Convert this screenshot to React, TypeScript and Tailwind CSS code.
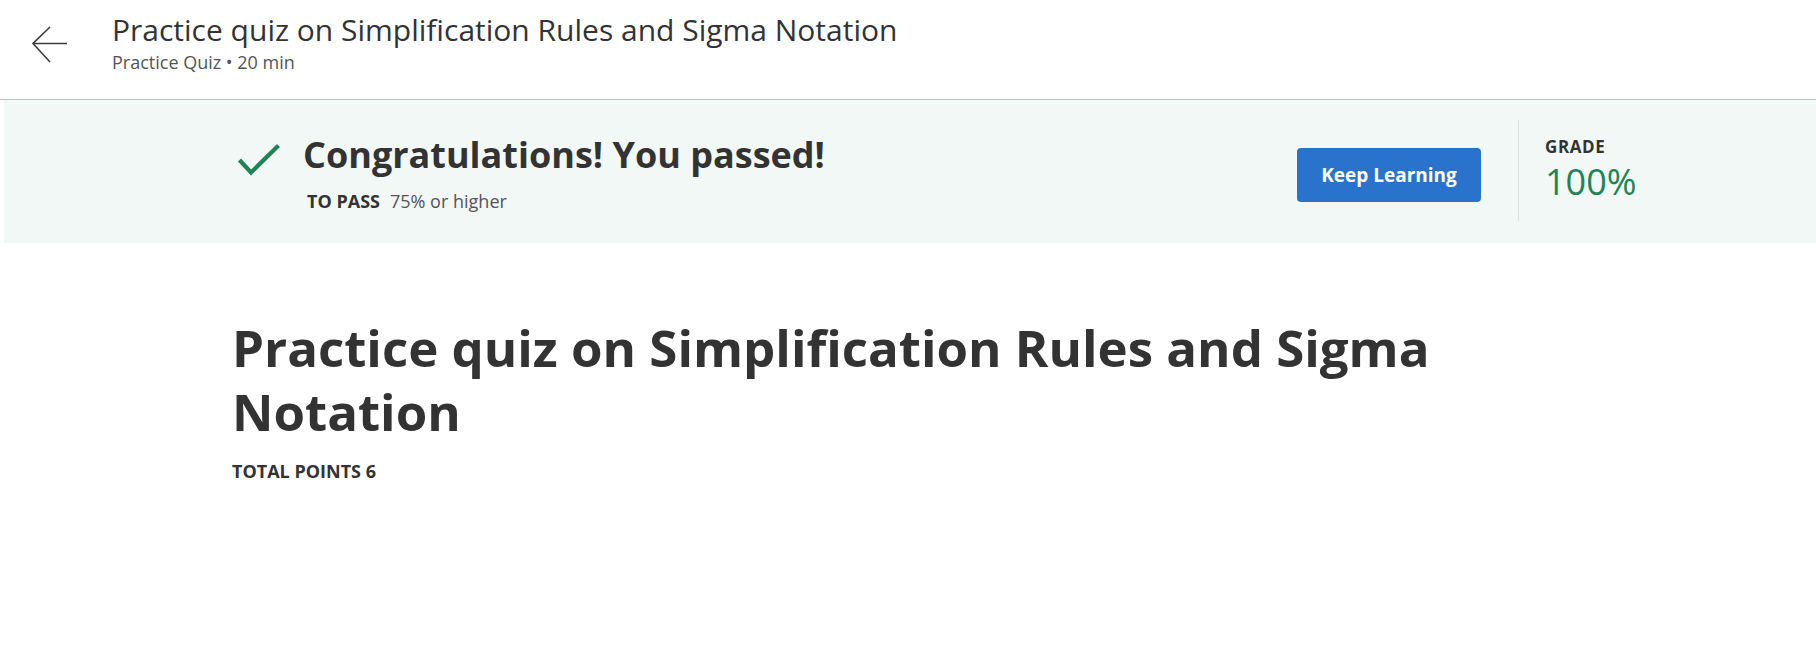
import React from "react";

const font = { fontFamily: '"Open Sans", "Liberation Sans", sans-serif' };

const BackArrow = () => (
  <svg width="36" height="37" viewBox="0 0 36 37" fill="none" className="mt-[14px] shrink-0">
    <path d="M18 1 L1 17.5 L18 36 M1 17.5 H35" stroke="#3c3c3c" strokeWidth="1.6" />
  </svg>
);

const Check = () => (
  <svg width="44" height="34" viewBox="0 0 44 34" fill="none" className="mt-[10px] shrink-0">
    <path d="M2.5 17 L14 29.5 L41.5 2.5" stroke="#1f8354" strokeWidth="4.2" />
  </svg>
);

export default function App() {
  return (
    <div className="min-h-[648px] w-[1816px] bg-white text-[#333]" style={font}>
      <header className="flex h-[100px] items-start gap-[44px] border-b border-[#c4c4c4] pl-[32px] pt-[12px]">
        <BackArrow />
        <div>
          <h1 className="text-[30px] leading-[36px] font-normal text-[#333]">
            Practice quiz on Simplification Rules and Sigma Notation
          </h1>
          <p className="mt-[3px] text-[18px] leading-[22px] text-[#555]">
            Practice Quiz • 20 min
          </p>
        </div>
      </header>

      <section className="ml-[4px] flex h-[143px] items-start bg-[#f1f8f5] pl-[233px] pr-[121px]">
        <div className="flex flex-1 items-start gap-[22px] pt-[33px]">
          <Check />
          <div>
            <h2 className="text-[36px] leading-[44px] font-bold text-[#333]">
              Congratulations! You passed!
            </h2>
            <p className="mt-[12px] flex items-baseline gap-[10px] pl-[4px] leading-[24px]">
              <span className="text-[18px] font-bold uppercase text-[#333]">To pass</span>
              <span className="text-[18px] text-[#555]">75% or higher</span>
            </p>
          </div>
        </div>
        <button className="mt-[48px] h-[54px] w-[184px] rounded-[4px] bg-[#2a73cc] text-[19px] font-bold text-white">
          Keep Learning
        </button>
        <div className="ml-[37px] mt-[20px] h-[101px] w-px bg-[#dce3e0]" />
        <div className="ml-[26px] w-[150px] pt-[36px]">
          <div className="text-[17px] leading-[21px] font-bold tracking-[0.6px] text-[#333]">GRADE</div>
          <div className="text-[36px] leading-[49px] font-normal text-[#1f8354]">100%</div>
        </div>
      </section>

      <main className="pl-[232px]">
        <h2 className="mt-[72px] max-w-[1300px] text-[51px] leading-[64px] font-bold text-[#333]">
          Practice quiz on Simplification Rules and Sigma Notation
        </h2>
        <p className="mt-[17px] text-[18px] leading-[22px] font-bold uppercase text-[#333]">
          Total points 6
        </p>
      </main>
    </div>
  );
}
